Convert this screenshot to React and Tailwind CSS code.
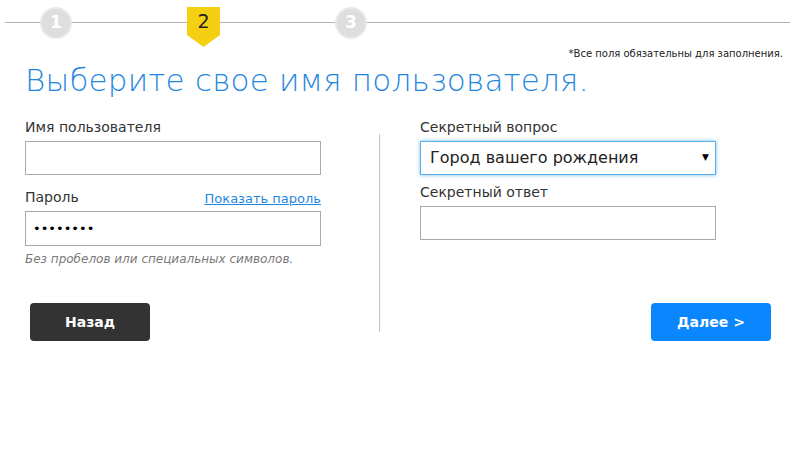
import React from "react";

function Circle({ n }) {
  return (
    <div className="mt-[7px] w-[32px] h-[32px] rounded-full bg-[#dedede] border-2 border-[#e8e8e8] flex items-center justify-center text-white font-bold text-[17px] shrink-0">
      {n}
    </div>
  );
}

function Line({ className }) {
  return <div className={"mt-[22px] h-px bg-[#b3b3b3] " + className} />;
}

function Stepper() {
  return (
    <div className="flex items-start h-[48px] pl-[5px] pr-[4px]">
      <Line className="w-[35px]" />
      <Circle n="1" />
      <Line className="w-[115px]" />
      <div className="mt-[7px] w-[33px] h-[40px] bg-[#f5cf12] [clip-path:polygon(0_0,100%_0,100%_70%,50%_100%,0_70%)] flex justify-center shrink-0">
        <span className="mt-[3px] text-[19px] font-medium text-[#222] leading-[22px]">2</span>
      </div>
      <Line className="w-[115px]" />
      <Circle n="3" />
      <Line className="flex-1" />
    </div>
  );
}

function Field({ label, children, right }) {
  return (
    <div>
      <div className="flex justify-between items-end h-[20px] mb-[3px]">
        <span className="text-[14px] text-[#333]">{label}</span>
        {right}
      </div>
      {children}
    </div>
  );
}

export default function App() {
  return (
    <div
      className="w-[794px] h-[455px] bg-white overflow-hidden"
      style={{ fontFamily: '"DejaVu Sans", sans-serif' }}
    >
      <Stepper />
      <div className="text-right text-[10px] text-[#222] pr-[11px] leading-[12px]">
        *Все поля обязательны для заполнения.
      </div>
      <h1 className="pl-[25px] text-[31px] font-extralight text-[#1f87e0] leading-[36px] mt-[2px] tracking-[0.2px]">
        Выберите свое имя пользователя.
      </h1>
      <div className="flex mt-[15px]">
        <div className="w-[296px] ml-[25px] flex flex-col pt-[5px]">
          <Field label="Имя пользователя">
            <input className="block w-full h-[34px] border border-[#a9a9a9] outline-none" />
          </Field>
          <div className="mt-[13px]">
            <Field
              label="Пароль"
              right={
                <span className="text-[13px] text-[#1f87e0] underline">Показать пароль</span>
              }
            >
              <div className="w-full h-[35px] border border-[#a9a9a9] flex items-center pl-[7px] text-[13px] text-black">
                ••••••••
              </div>
            </Field>
          </div>
          <div className="mt-[4px] text-[12px] italic text-[#7a7a7a]">
            Без пробелов или специальных символов.
          </div>
          <div className="mt-[35px] ml-[5px] w-[120px] h-[38px] rounded-[4px] bg-[#333333] text-white font-bold text-[14px] flex items-center justify-center">
            Назад
          </div>
        </div>
        <div className="ml-[58px] mt-[21px] w-px bg-[#c4c4c4] h-[198px]" />
        <div className="ml-[40px] w-[296px] flex flex-col pt-[5px]">
          <Field label="Секретный вопрос">
            <div className="w-full h-[34px] border border-[#5aaee8] shadow-[0_0_4px_rgba(70,160,230,0.7)] flex items-center justify-between pl-[9px] pr-[6px]">
              <span className="text-[16px] text-[#222]">Город вашего рождения</span>
              <span className="text-[9px] text-black">▼</span>
            </div>
          </Field>
          <div className="mt-[8px]">
            <Field label="Секретный ответ">
              <input className="block w-full h-[34px] border border-[#a9a9a9] outline-none" />
            </Field>
          </div>
          <div className="mt-[63px] self-end mr-[-55px] w-[120px] h-[38px] rounded-[4px] bg-[#0a86ff] text-white font-bold text-[14px] flex items-center justify-center">
            Далее &gt;
          </div>
        </div>
      </div>
    </div>
  );
}
